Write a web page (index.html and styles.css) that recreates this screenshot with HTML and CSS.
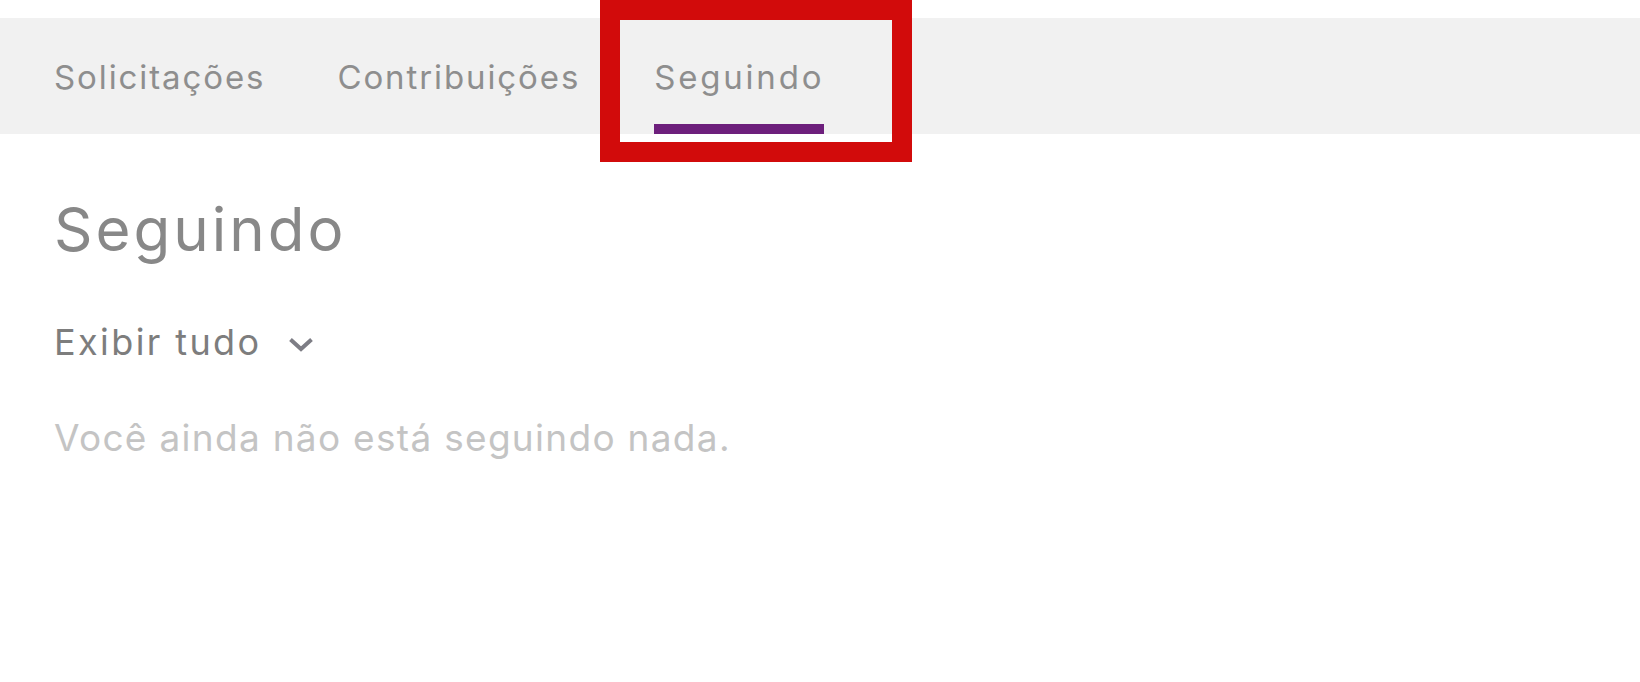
FILE: index.html
```html
<!DOCTYPE html>
<html lang="pt-BR">
<head>
<meta charset="utf-8">
<title>Seguindo</title>
<link rel="stylesheet" href="styles.css">
</head>
<body>
<div class="page">
  <nav class="tabs">
    <a class="tab">Solicitações</a>
    <a class="tab">Contribuições</a>
    <a class="tab active">Seguindo</a>
  </nav>
  <main class="content">
    <h1 class="title">Seguindo</h1>
    <div class="filter">
      <span class="filter-label">Exibir tudo</span>
      <svg class="chevron" width="24" height="14" viewBox="0 0 24 14"><polyline points="1.5,1.5 12,11 22.5,1.5" fill="none" stroke="#7d7d85" stroke-width="4" stroke-linejoin="miter"/></svg>
    </div>
    <p class="empty">Você ainda não está seguindo nada.</p>
  </main>
  <div class="highlight"></div>
</div>
</body>
</html>
```
FILE: styles.css
```css
* { box-sizing: border-box; }
html, body { margin: 0; padding: 0; background: #fff; }
body { font-family: Inter, "DejaVu Sans", sans-serif; }
.page { position: relative; padding-top: 18px; min-height: 682px; }
.tabs {
  display: flex;
  gap: 72px;
  height: 116px;
  background: #f1f1f1;
  padding-left: 54px;
}
.tab {
  display: block;
  font-size: 33px;
  line-height: 40px;
  letter-spacing: 1.9px;
  color: #8e8e8e;
  padding-top: 39px;
  padding-bottom: 27px;
  border-bottom: 10px solid transparent;
}
.tab.active {
  border-bottom-color: #6d1f7c;
  letter-spacing: 2.8px;
  margin-left: 2px;
}
.content { padding-left: 54px; }
.title {
  margin: 60px 0 0;
  font-weight: 400;
  font-size: 60px;
  line-height: 70px;
  letter-spacing: 3px;
  color: #888;
}
.filter {
  display: flex;
  align-items: center;
  gap: 27px;
  margin-top: 56px;
  height: 44px;
}
.filter-label {
  font-size: 36px;
  line-height: 44px;
  color: #7d7d7d;
  letter-spacing: 2.4px;
}
.chevron { display: block; margin-top: 5px; }
.empty {
  margin: 52px 0 0;
  font-size: 37px;
  line-height: 44px;
  color: #c4c4c4;
  letter-spacing: 1.3px;
}
.highlight {
  position: absolute;
  left: 600px;
  top: 0;
  width: 312px;
  height: 162px;
  border: 20px solid #d20b0b;
}
```
